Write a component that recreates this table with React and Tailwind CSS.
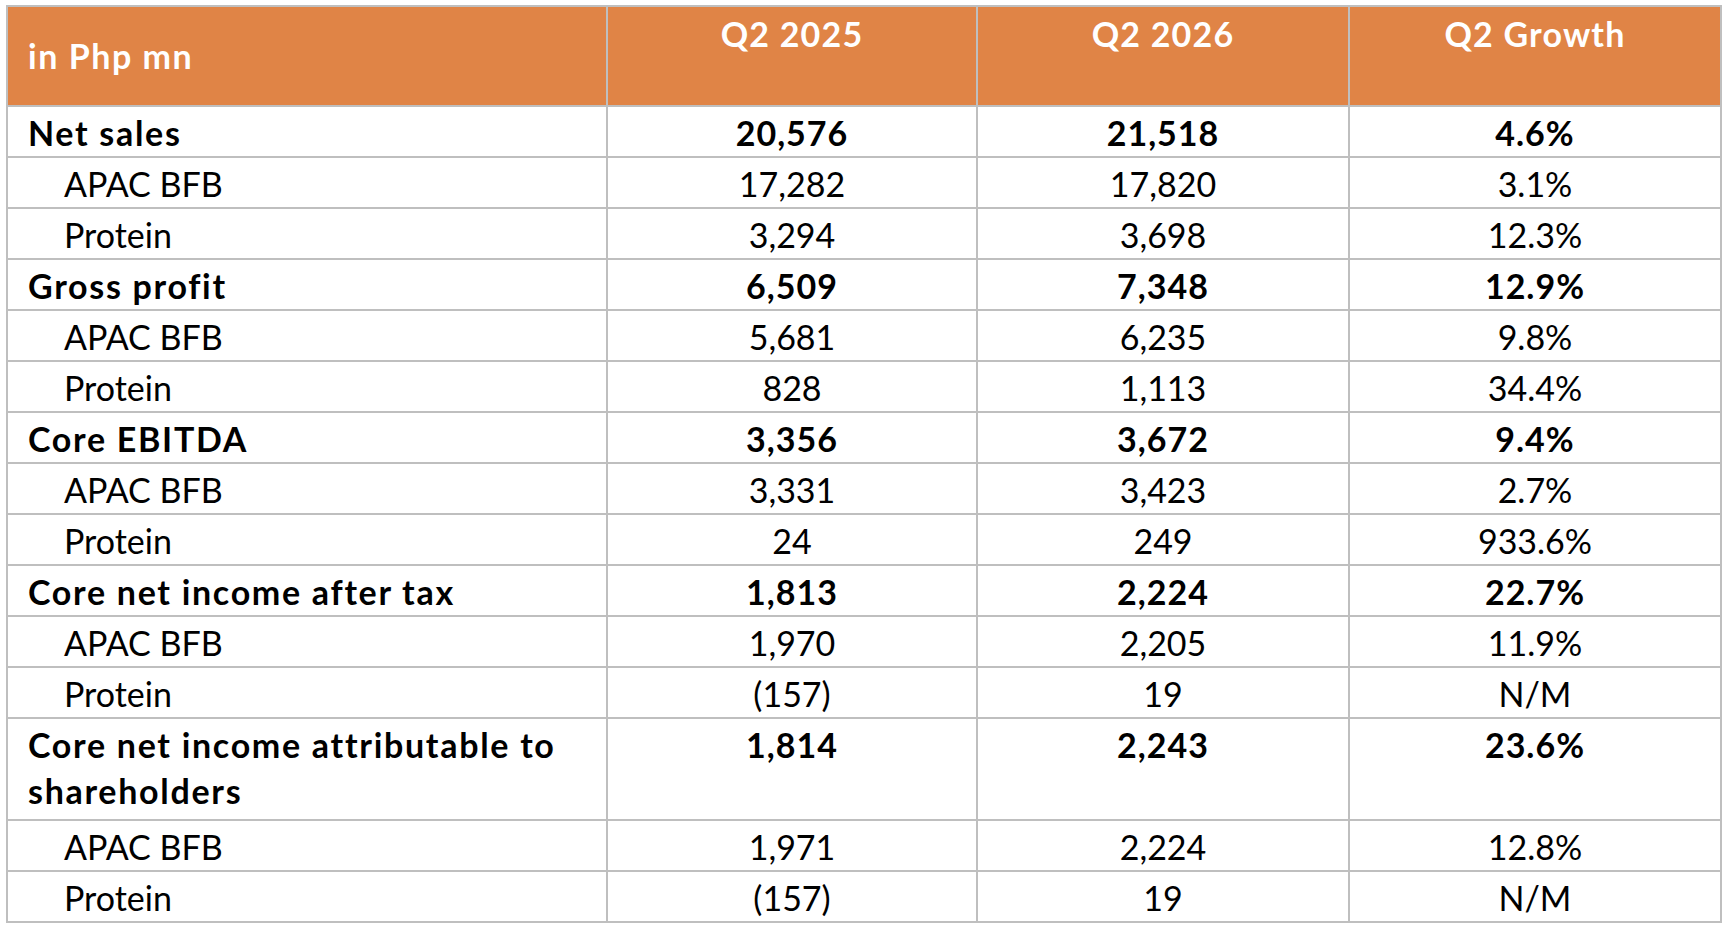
import React from "react";

const rows = [
  { label: "Net sales", a: "20,576", b: "21,518", g: "4.6%", bold: true },
  { label: "APAC BFB", a: "17,282", b: "17,820", g: "3.1%" },
  { label: "Protein", a: "3,294", b: "3,698", g: "12.3%" },
  { label: "Gross profit", a: "6,509", b: "7,348", g: "12.9%", bold: true },
  { label: "APAC BFB", a: "5,681", b: "6,235", g: "9.8%" },
  { label: "Protein", a: "828", b: "1,113", g: "34.4%" },
  { label: "Core EBITDA", a: "3,356", b: "3,672", g: "9.4%", bold: true },
  { label: "APAC BFB", a: "3,331", b: "3,423", g: "2.7%" },
  { label: "Protein", a: "24", b: "249", g: "933.6%" },
  { label: "Core net income after tax", a: "1,813", b: "2,224", g: "22.7%", bold: true },
  { label: "APAC BFB", a: "1,970", b: "2,205", g: "11.9%" },
  { label: "Protein", a: "(157)", b: "19", g: "N/M" },
  { label: "Core net income attributable to shareholders", a: "1,814", b: "2,243", g: "23.6%", bold: true, tall: true },
  { label: "APAC BFB", a: "1,971", b: "2,224", g: "12.8%" },
  { label: "Protein", a: "(157)", b: "19", g: "N/M" },
];

const cell = "border-2 border-[#bfbfbf] align-top pt-[3px]";

const App = () => {
  return (
    <div className="w-[1730px] h-[930px] bg-white pt-[5px] pl-[6px] font-['Lato',sans-serif] text-black">
      <table className="border-collapse table-fixed w-[1714px] text-[34px] leading-[46px]">
        <colgroup>
          <col className="w-[600px]" />
          <col className="w-[370px]" />
          <col className="w-[372px]" />
          <col className="w-[372px]" />
        </colgroup>
        <thead>
          <tr className="bg-[#e08446] text-white h-[100px]">
            <th className="border-2 border-[#bfbfbf] text-left align-middle pl-[20px] font-bold tracking-[0.045em]">
              in Php mn
            </th>
            {["Q2 2025", "Q2 2026", "Q2 Growth"].map((h) => (
              <th key={h} className="border-2 border-[#bfbfbf] text-center align-top pt-[4px] font-bold tracking-[0.035em]">
                {h}
              </th>
            ))}
          </tr>
        </thead>
        <tbody>
          {rows.map((r, i) => (
            <tr key={i} className={r.bold ? "font-bold" : "font-normal"}>
              <td
                className={`${cell} pr-2 ${r.bold ? "pl-[20px] tracking-[0.05em]" : "pl-[56px]"} ${
                  r.tall ? "pb-[5px]" : ""
                }`}
              >
                {r.label}
              </td>
              <td className={`${cell} text-center ${r.bold ? "tracking-[0.03em]" : ""}`}>{r.a}</td>
              <td className={`${cell} text-center ${r.bold ? "tracking-[0.03em]" : ""}`}>{r.b}</td>
              <td className={`${cell} text-center ${r.bold ? "tracking-[0.03em]" : ""}`}>{r.g}</td>
            </tr>
          ))}
        </tbody>
      </table>
    </div>
  );
};

export default App;
